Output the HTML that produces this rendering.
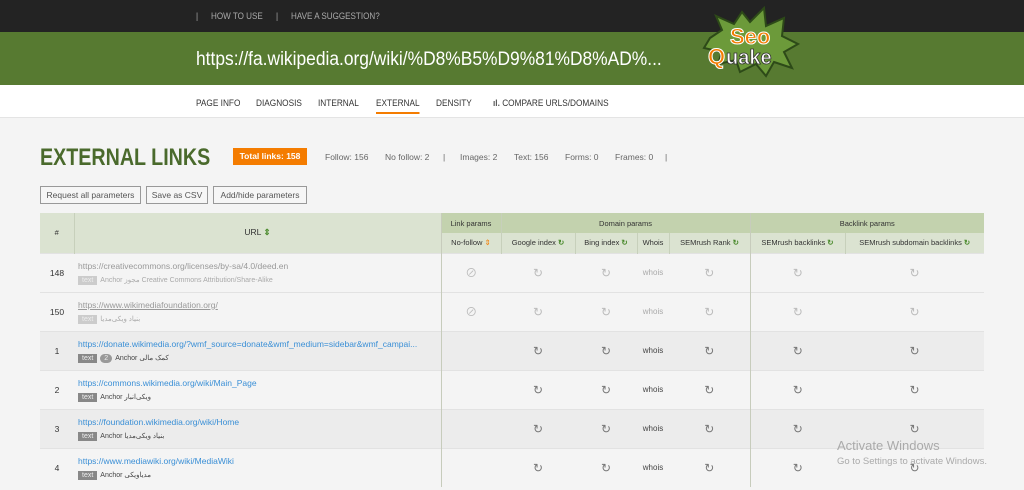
<!DOCTYPE html><html><head><meta charset="utf-8"><style>
*{margin:0;padding:0;box-sizing:border-box}
body{width:1024px;height:490px;overflow:hidden;background:#f4f4f4;font-family:"Liberation Sans","Noto Sans CJK SC",sans-serif;position:relative;color:#333}
.top{position:absolute;left:0;top:0;width:1024px;height:32px;background:#232323;color:#aaa;font-size:9.5px}
.top span{position:absolute;top:11px;transform:scaleX(.85);transform-origin:left}
.green{position:absolute;left:0;top:32px;width:1024px;height:53px;background:#577a31}
.url{position:absolute;left:196px;top:49px;color:#fff;font-size:19px;transform:scaleX(.915);transform-origin:left;white-space:nowrap}
.nav{position:absolute;left:0;top:85px;width:1024px;height:33px;background:#fff;border-bottom:1px solid #e4e4e4}
.nav span{position:absolute;top:13px;font-size:9.5px;color:#333;transform:scaleX(.87);transform-origin:left;white-space:nowrap}
h1{position:absolute;left:40px;top:144px;font-size:24px;color:#4a6a2c;font-weight:bold;transform:scaleX(.82);transform-origin:left;white-space:nowrap}
.badge{position:absolute;left:233px;top:148px;width:74px;height:17px;background:#f47c00;color:#fff;font-size:8.5px;font-weight:bold;text-align:center;line-height:17px}
.stat{position:absolute;top:152px;font-size:8.5px;color:#666}
.btn{position:absolute;top:186px;height:18px;border:1px solid #999;background:#f6f6f6;font-size:8.5px;color:#555;text-align:center;line-height:16px}
table{position:absolute;left:40px;top:213px;width:944px;border-collapse:collapse;font-size:7.5px;table-layout:fixed}
th{background:#dbe3d1;font-weight:normal;color:#333;height:20px;border-left:1px solid #c7d0bb}
th.g{background:#c3d2ae}
td{height:39px;text-align:center;color:#aaa;border-top:1px solid #e2e2e2}
td.n{color:#333;font-size:8.5px}
td.u{text-align:left;padding-left:4px}
.l{font-size:8.5px;color:#999;display:block;margin-bottom:4px}
.b{color:#3a8fd6}
.t{display:inline-block;background:#888;color:#eee;font-size:7px;padding:1px 4px;margin-right:3px}
.t2{background:#ccc}
.a{font-size:7px;color:#444}
.a2{color:#aaa}
.dk td{background:#ececec}
.sep{border-left:1px solid #c7ccbc}
.r{color:#bbb;font-size:12px}
.gr{color:#4a8a2c;font-weight:bold}
</style></head><body>
<div class="top"><span style="left:196px">|</span><span style="left:211px">HOW TO USE</span><span style="left:276px">|</span><span style="left:291px">HAVE A SUGGESTION?</span></div>
<div class="green"></div>
<div class="url">https://fa.wikipedia.org/wiki/%D8%B5%D9%81%D8%AD%...</div>
<svg style="position:absolute;left:700px;top:6px" width="100" height="72"><polygon points="10,32 22,24 16,10 34,18 42,6 50,16 64,2 66,20 84,12 82,30 98,38 84,46 92,62 74,56 66,70 56,58 40,66 36,54 18,58 22,46 4,42" fill="#6c9a3a" stroke="#2d4a18" stroke-width="2"/>
<text x="30" y="38" font-family="Liberation Sans" font-weight="bold" font-size="22" fill="#f47c00" stroke="#fff" stroke-width="1">Seo</text>
<text x="8" y="58" font-family="Liberation Sans" font-weight="bold" font-size="22" fill="#f47c00" stroke="#fff" stroke-width="1">Q</text>
<text x="26" y="58" font-family="Liberation Sans" font-weight="bold" font-size="20" fill="#fff" stroke="#333" stroke-width=".8">uake</text></svg>
<div class="nav"><span style="left:196px">PAGE INFO</span><span style="left:256px">DIAGNOSIS</span><span style="left:318px">INTERNAL</span><span style="left:376px;border-bottom:2px solid #f47c00;padding-bottom:3px">EXTERNAL</span><span style="left:436px">DENSITY</span><span style="left:493px"><b style="color:#555">ıl.</b> COMPARE URLS/DOMAINS</span></div>
<h1>EXTERNAL LINKS</h1>
<div class="badge">Total links: 158</div>
<span class="stat" style="left:325px">Follow: 156</span><span class="stat" style="left:385px">No follow: 2</span><span class="stat" style="left:443px">|</span><span class="stat" style="left:460px">Images: 2</span><span class="stat" style="left:514px">Text: 156</span><span class="stat" style="left:565px">Forms: 0</span><span class="stat" style="left:615px">Frames: 0</span><span class="stat" style="left:665px">|</span>
<div class="btn" style="left:40px;width:101px">Request all parameters</div>
<div class="btn" style="left:146px;width:62px">Save as CSV</div>
<div class="btn" style="left:213px;width:94px">Add/hide parameters</div>
<table>
<colgroup><col style="width:34px"><col style="width:367px"><col style="width:60px"><col style="width:74px"><col style="width:62px"><col style="width:32px"><col style="width:81px"><col style="width:95px"><col style="width:139px"></colgroup>
<tr><th rowspan="2" style="border-left:none">#</th><th rowspan="2" style="font-size:8.5px">URL <span class="gr">⇕</span></th><th class="g sep">Link params</th><th class="g" colspan="4">Domain params</th><th class="g sep" colspan="2">Backlink params</th></tr>
<tr><th class="sep">No-follow <span style="color:#f47c00">⇕</span></th><th>Google index <span class="gr">↻</span></th><th>Bing index <span class="gr">↻</span></th><th>Whois</th><th>SEMrush Rank <span class="gr">↻</span></th><th class="sep">SEMrush backlinks <span class="gr">↻</span></th><th>SEMrush subdomain backlinks <span class="gr">↻</span></th></tr>
<tr><td class="n">148</td><td class="u"><span class="l">https://creativecommons.org/licenses/by-sa/4.0/deed.en</span><span class="t t2">text</span><span class="a a2">Anchor مجوز Creative Commons Attribution/Share-Alike</span></td><td class="sep r">⊘</td><td class="r">↻</td><td class="r">↻</td><td style="font-size:8px">whois</td><td class="r">↻</td><td class="sep r">↻</td><td class="r">↻</td></tr>
<tr><td class="n">150</td><td class="u"><span class="l" style="text-decoration:underline">https://www.wikimediafoundation.org/</span><span class="t t2">text</span><span class="a a2">بنیاد ویکی‌مدیا</span></td><td class="sep r">⊘</td><td class="r">↻</td><td class="r">↻</td><td style="font-size:8px">whois</td><td class="r">↻</td><td class="sep r">↻</td><td class="r">↻</td></tr>
<tr class="dk"><td class="n">1</td><td class="u"><span class="l b">https://donate.wikimedia.org/?wmf_source=donate&amp;wmf_medium=sidebar&amp;wmf_campai...</span><span class="t">text</span><span class="t" style="border-radius:7px;background:#999">2</span><span class="a">Anchor کمک مالی</span></td><td class="sep"></td><td class="r" style="color:#777">↻</td><td class="r" style="color:#777">↻</td><td style="font-size:8px;color:#444">whois</td><td class="r" style="color:#777">↻</td><td class="sep r" style="color:#777">↻</td><td class="r" style="color:#777">↻</td></tr>
<tr><td class="n">2</td><td class="u"><span class="l b">https://commons.wikimedia.org/wiki/Main_Page</span><span class="t">text</span><span class="a">Anchor ویکی‌انبار</span></td><td class="sep"></td><td class="r" style="color:#777">↻</td><td class="r" style="color:#777">↻</td><td style="font-size:8px;color:#444">whois</td><td class="r" style="color:#777">↻</td><td class="sep r" style="color:#777">↻</td><td class="r" style="color:#777">↻</td></tr>
<tr class="dk"><td class="n">3</td><td class="u"><span class="l b">https://foundation.wikimedia.org/wiki/Home</span><span class="t">text</span><span class="a">Anchor بنیاد ویکی‌مدیا</span></td><td class="sep"></td><td class="r" style="color:#777">↻</td><td class="r" style="color:#777">↻</td><td style="font-size:8px;color:#444">whois</td><td class="r" style="color:#777">↻</td><td class="sep r" style="color:#777">↻</td><td class="r" style="color:#777">↻</td></tr>
<tr><td class="n">4</td><td class="u"><span class="l b">https://www.mediawiki.org/wiki/MediaWiki</span><span class="t">text</span><span class="a">Anchor مدیاویکی</span></td><td class="sep"></td><td class="r" style="color:#777">↻</td><td class="r" style="color:#777">↻</td><td style="font-size:8px;color:#444">whois</td><td class="r" style="color:#777">↻</td><td class="sep r" style="color:#777">↻</td><td class="r" style="color:#777">↻</td></tr>
</table>
<div style="position:absolute;left:837px;top:438px;color:#aaa;font-size:13px">Activate Windows</div>
<div style="position:absolute;left:837px;top:456px;color:#aaa;font-size:9.5px">Go to Settings to activate Windows.</div>
</body></html>
